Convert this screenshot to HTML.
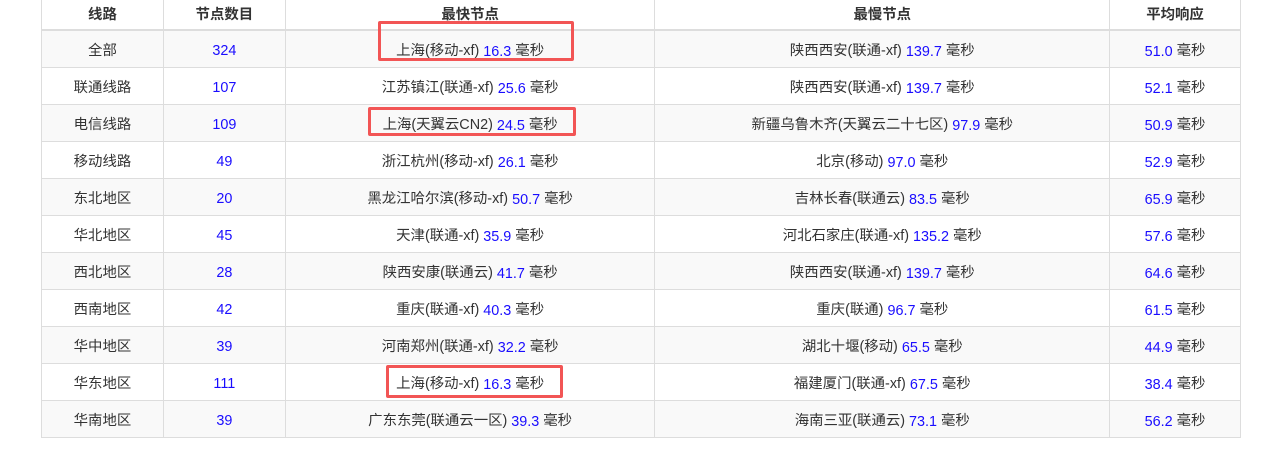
<!DOCTYPE html>
<html><head><meta charset="utf-8"><style>
body{margin:0;width:1264px;height:454px;background:#fff;position:relative;overflow:hidden;font-family:"Liberation Sans","Noto Sans CJK SC",sans-serif;font-size:14.4px;color:#333}
table{position:absolute;left:41px;top:-1px;border-collapse:collapse;width:1200px}
td,th{border:1px solid #ddd;text-align:center;padding:0;height:36px}
td{padding-top:1px;height:35px}
th{height:27px;padding-bottom:2px;border-bottom:2px solid #ddd;font-weight:bold;color:#333}
tr:nth-child(odd) td{background:#f9f9f9}
tbody tr:nth-child(even) td{background:#fff}
b{font-weight:normal;color:#1a0dff;position:relative;top:1px}
.r{position:absolute;border:3px solid #f25555;border-radius:2px}
</style></head><body>
<table>
<colgroup><col style="width:122px"><col style="width:122px"><col style="width:370px"><col style="width:455px"><col style="width:131px"></colgroup>
<thead><tr><th>线路</th><th>节点数目</th><th>最快节点</th><th>最慢节点</th><th>平均响应</th></tr></thead>
<tbody>
<tr><td>全部</td><td><b>324</b></td><td>上海(移动-xf) <b>16.3</b> 毫秒</td><td>陕西西安(联通-xf) <b>139.7</b> 毫秒</td><td><b>51.0</b> 毫秒</td></tr>
<tr><td>联通线路</td><td><b>107</b></td><td>江苏镇江(联通-xf) <b>25.6</b> 毫秒</td><td>陕西西安(联通-xf) <b>139.7</b> 毫秒</td><td><b>52.1</b> 毫秒</td></tr>
<tr><td>电信线路</td><td><b>109</b></td><td>上海(天翼云CN2) <b>24.5</b> 毫秒</td><td>新疆乌鲁木齐(天翼云二十七区) <b>97.9</b> 毫秒</td><td><b>50.9</b> 毫秒</td></tr>
<tr><td>移动线路</td><td><b>49</b></td><td>浙江杭州(移动-xf) <b>26.1</b> 毫秒</td><td>北京(移动) <b>97.0</b> 毫秒</td><td><b>52.9</b> 毫秒</td></tr>
<tr><td>东北地区</td><td><b>20</b></td><td>黑龙江哈尔滨(移动-xf) <b>50.7</b> 毫秒</td><td>吉林长春(联通云) <b>83.5</b> 毫秒</td><td><b>65.9</b> 毫秒</td></tr>
<tr><td>华北地区</td><td><b>45</b></td><td>天津(联通-xf) <b>35.9</b> 毫秒</td><td>河北石家庄(联通-xf) <b>135.2</b> 毫秒</td><td><b>57.6</b> 毫秒</td></tr>
<tr><td>西北地区</td><td><b>28</b></td><td>陕西安康(联通云) <b>41.7</b> 毫秒</td><td>陕西西安(联通-xf) <b>139.7</b> 毫秒</td><td><b>64.6</b> 毫秒</td></tr>
<tr><td>西南地区</td><td><b>42</b></td><td>重庆(联通-xf) <b>40.3</b> 毫秒</td><td>重庆(联通) <b>96.7</b> 毫秒</td><td><b>61.5</b> 毫秒</td></tr>
<tr><td>华中地区</td><td><b>39</b></td><td>河南郑州(联通-xf) <b>32.2</b> 毫秒</td><td>湖北十堰(移动) <b>65.5</b> 毫秒</td><td><b>44.9</b> 毫秒</td></tr>
<tr><td>华东地区</td><td><b>111</b></td><td>上海(移动-xf) <b>16.3</b> 毫秒</td><td>福建厦门(联通-xf) <b>67.5</b> 毫秒</td><td><b>38.4</b> 毫秒</td></tr>
<tr><td>华南地区</td><td><b>39</b></td><td>广东东莞(联通云一区) <b>39.3</b> 毫秒</td><td>海南三亚(联通云) <b>73.1</b> 毫秒</td><td><b>56.2</b> 毫秒</td></tr>
</tbody></table>
<div class="r" style="left:378px;top:21px;width:190px;height:34px"></div>
<div class="r" style="left:368px;top:107px;width:202px;height:23px"></div>
<div class="r" style="left:386px;top:365px;width:171px;height:27px"></div>
</body></html>
